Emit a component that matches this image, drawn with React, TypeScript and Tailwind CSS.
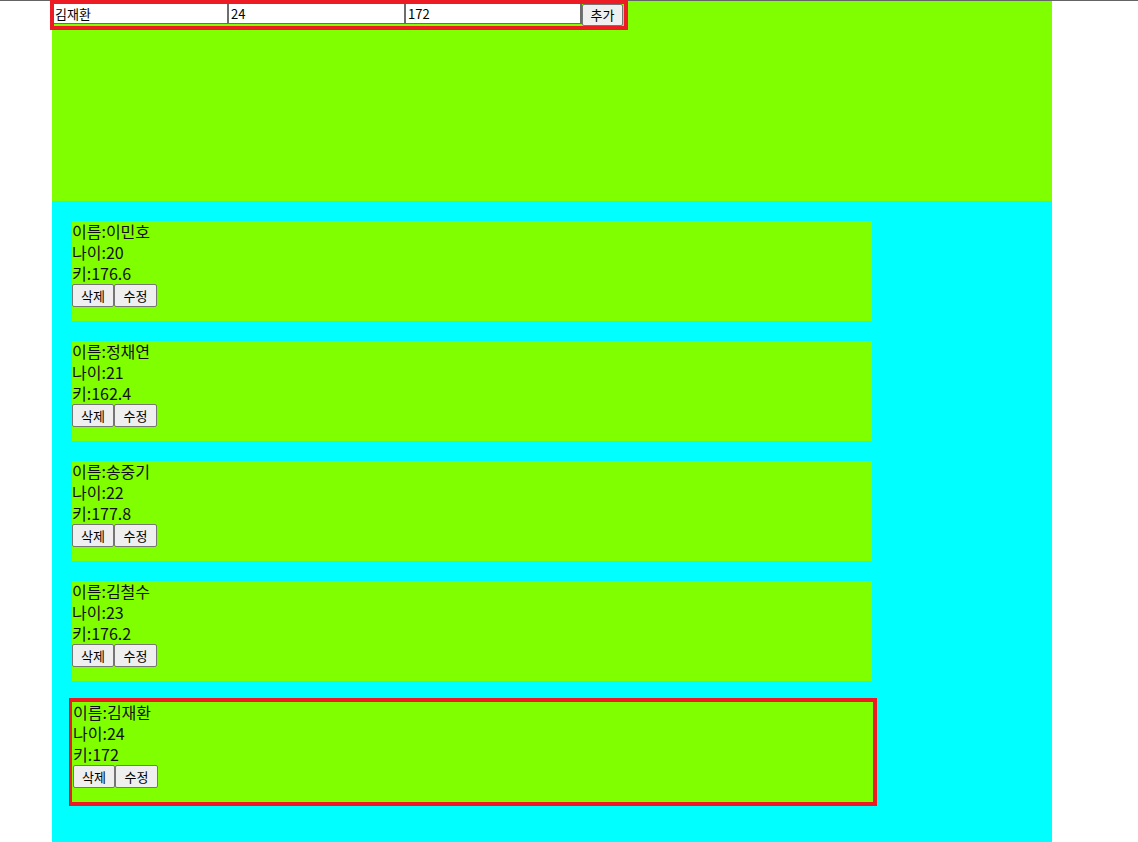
import React from "react";
import { useState } from "react";

type Person = { name: string; age: number; height: number };

const initial: Person[] = [
  { name: "이민호", age: 20, height: 176.6 },
  { name: "정채연", age: 21, height: 162.4 },
  { name: "송중기", age: 22, height: 177.8 },
  { name: "김철수", age: 23, height: 176.2 },
  { name: "김재환", age: 24, height: 172 },
];

const font = { fontFamily: '"Noto Sans CJK KR", "Noto Sans", sans-serif' };

const App = () => {
  const [people, setPeople] = useState<Person[]>(initial);
  const [name, setName] = useState("김재환");
  const [age, setAge] = useState("24");
  const [height, setHeight] = useState("172");

  const addPerson = () => {
    setPeople([...people, { name, age: Number(age), height: Number(height) }]);
  };

  const removePerson = (i: number) => {
    setPeople(people.filter((_, idx) => idx !== i));
  };

  return (
    <div className="min-h-[842px] bg-white border-t border-[#646464]" style={font}>
      <div className="ml-[52px] w-[1000px]">
        {/* header */}
        <div className="h-[200px] bg-[#80ff00] flow-root">
          <div className="-ml-[2px] -mt-[1px] flex w-[578px] h-[30px] border-4 border-[#ed1c24] items-start">
            <input
              value={name}
              onChange={(e) => setName(e.target.value)}
              className="w-[175px] h-[20px] bg-white border-0 border-r-2 border-b border-[#6d6d6d] px-[1px] text-[13px] leading-[19px] text-black outline-none"
            />
            <input
              value={age}
              onChange={(e) => setAge(e.target.value)}
              className="w-[177px] h-[20px] bg-white border-0 border-r-2 border-b border-[#6d6d6d] px-[2px] text-[13px] leading-[19px] text-black outline-none"
            />
            <input
              value={height}
              onChange={(e) => setHeight(e.target.value)}
              className="w-[176px] h-[20px] bg-white border-0 border-r-2 border-b border-[#6d6d6d] px-[2px] text-[13px] leading-[19px] text-black outline-none"
            />
            <button
              onClick={addPerson}
              className="w-[41px] h-[22px] bg-[#efefef] border border-[#767676] rounded-[2px] text-[13px] leading-[18px] text-black"
            >
              추가
            </button>
          </div>
        </div>

        {/* list */}
        <div className="bg-[#00ffff] min-h-[641px] px-[20px] pt-[20px] pb-[20px] flex flex-col gap-[20px]">
          {people.map((p, i) => {
            const selected = i === people.length - 1;
            return (
              <div
                key={i}
                className={
                  selected
                    ? "w-[808px] h-[108px] -ml-[3px] -mt-[3px] border-4 border-l-[3px] border-[#ed1c24] bg-[#80ff00] pl-[1px]"
                    : "w-[800px] h-[100px] bg-[#80ff00]"
                }
              >
                <div className="text-[16px] leading-[21px] text-[#111]">
                  <div>이름:{p.name}</div>
                  <div>나이:{p.age}</div>
                  <div>키:{p.height}</div>
                </div>
                <div className="flex">
                  <button
                    onClick={() => removePerson(i)}
                    className="w-[42px] h-[23px] bg-[#efefef] border border-[#767676] rounded-[2px] text-[13px] leading-[19px] text-black"
                  >
                    삭제
                  </button>
                  <button className="w-[43px] h-[23px] bg-[#efefef] border border-[#767676] rounded-[2px] text-[13px] leading-[19px] text-black">
                    수정
                  </button>
                </div>
              </div>
            );
          })}
        </div>
      </div>
    </div>
  );
};

export default App;
